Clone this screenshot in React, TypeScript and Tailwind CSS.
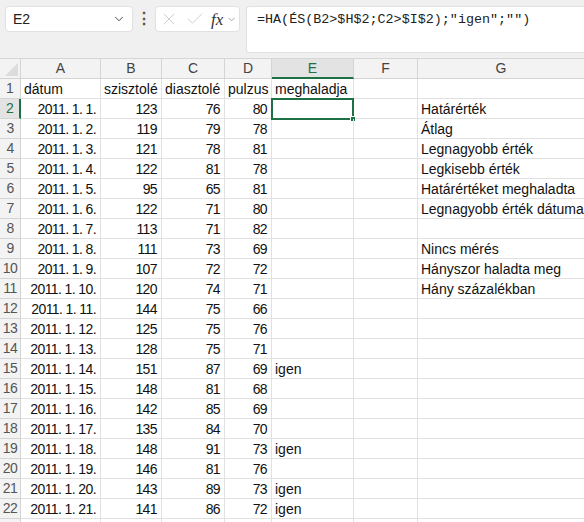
import { ChevronDown, X, Check } from "lucide-react"

type Row = { a: string; b: number; c: number; d: number; e?: string; g?: string }

const rows: Row[] = [
  { a: "2011. 1. 1.", b: 123, c: 76, d: 80, g: "Határérték" },
  { a: "2011. 1. 2.", b: 119, c: 79, d: 78, g: "Átlag" },
  { a: "2011. 1. 3.", b: 121, c: 78, d: 81, g: "Legnagyobb érték" },
  { a: "2011. 1. 4.", b: 122, c: 81, d: 78, g: "Legkisebb érték" },
  { a: "2011. 1. 5.", b: 95, c: 65, d: 81, g: "Határértéket meghaladta" },
  { a: "2011. 1. 6.", b: 122, c: 71, d: 80, g: "Legnagyobb érték dátuma" },
  { a: "2011. 1. 7.", b: 113, c: 71, d: 82 },
  { a: "2011. 1. 8.", b: 111, c: 73, d: 69, g: "Nincs mérés" },
  { a: "2011. 1. 9.", b: 107, c: 72, d: 72, g: "Hányszor haladta meg" },
  { a: "2011. 1. 10.", b: 120, c: 74, d: 71, g: "Hány százalékban" },
  { a: "2011. 1. 11.", b: 144, c: 75, d: 66 },
  { a: "2011. 1. 12.", b: 125, c: 75, d: 76 },
  { a: "2011. 1. 13.", b: 128, c: 75, d: 71 },
  { a: "2011. 1. 14.", b: 151, c: 87, d: 69, e: "igen" },
  { a: "2011. 1. 15.", b: 148, c: 81, d: 68 },
  { a: "2011. 1. 16.", b: 142, c: 85, d: 69 },
  { a: "2011. 1. 17.", b: 135, c: 84, d: 70 },
  { a: "2011. 1. 18.", b: 148, c: 91, d: 73, e: "igen" },
  { a: "2011. 1. 19.", b: 146, c: 81, d: 76 },
  { a: "2011. 1. 20.", b: 143, c: 89, d: 73, e: "igen" },
  { a: "2011. 1. 21.", b: 141, c: 86, d: 72, e: "igen" },
]

const grid = "grid grid-cols-[21px_80px_61px_63px_47px_82px_64px_1fr]"
const cell = "h-[20px] border-r border-b border-[#e1e1e1] leading-[21px] px-[3px] whitespace-nowrap overflow-visible"
const num = "text-right tracking-[-0.6px] pr-[4px]"
const colHead = "h-[20px] border-r border-b border-[#d4d4d4] flex items-center justify-center text-[14px] text-[#444]"

export default function App() {
  return (
    <div className="w-[584px] h-[522px] overflow-hidden bg-white text-[14px] text-[#111]" style={{ fontFamily: '"Liberation Sans", Arial, sans-serif' }}>
      {/* formula bar */}
      <div className="h-[59px] bg-[#f0f0f0] border-b border-[#d6d6d6] flex items-start pt-[6px] pl-[5px]">
        <div className="w-[128px] h-[26px] bg-white border border-[#e1e1e1] rounded-[4px] flex items-center justify-between pl-[7px] pr-[6px]">
          <span className="text-[14px] text-[#222]">E2</span>
          <ChevronDown className="w-[14px] h-[14px] text-[#444]" strokeWidth={1.6} />
        </div>
        <div className="w-[22px] h-[26px] flex items-center justify-center text-[#555] text-[16px] font-bold">⋮</div>
        <div className="w-[85px] h-[26px] bg-white border border-[#e1e1e1] rounded-[4px] flex items-center pl-[3px]">
          <X className="w-[20px] h-[20px] text-[#c4c4c4]" strokeWidth={1} />
          <Check className="ml-[6px] w-[20px] h-[20px] text-[#c4c4c4]" strokeWidth={1} />
          <span className="ml-[6px] text-[17px] italic text-[#333] leading-none" style={{ fontFamily: '"Liberation Serif", serif' }}>fx</span>
          <ChevronDown className="ml-[3px] w-[11px] h-[11px] text-[#888]" strokeWidth={1.6} />
        </div>
        <div className="ml-[6px] flex-1 h-[47px] bg-white border border-[#e1e1e1] rounded-l-[4px] border-r-0 pl-[10px] pt-[3px] text-[13.4px] text-[#222]" style={{ fontFamily: '"Liberation Mono", monospace' }}>
          =HA(ÉS(B2&gt;$H$2;C2&gt;$I$2);"igen";"")
        </div>
      </div>

      {/* column headers */}
      <div className={`${grid} bg-[#f3f3f3]`}>
        <div className="h-[20px] border-r border-b border-[#d4d4d4] relative">
          <div className="absolute right-[2px] bottom-[2px] w-0 h-0 border-l-[13px] border-l-transparent border-b-[13px] border-b-[#dcdcdc]" />
        </div>
        {["A", "B", "C", "D"].map((c) => (
          <div key={c} className={colHead}>{c}</div>
        ))}
        <div className="h-[20px] border-r border-[#d4d4d4] border-b-2 border-b-[#1e7145] bg-[#e3e3e3] flex items-center justify-center text-[14px] text-[#1e7145]">E</div>
        <div className={colHead}>F</div>
        <div className={`${colHead} border-r-0`}>G</div>
      </div>

      {/* row 1 */}
      <div className={grid}>
        <div className="h-[20px] border-r border-b border-[#d4d4d4] bg-[#f3f3f3] flex items-center justify-center text-[14px] text-[#555]">1</div>
        <div className={cell}>dátum</div>
        <div className={cell}>szisztolé</div>
        <div className={cell}>diasztolé</div>
        <div className={cell}>pulzus</div>
        <div className={cell}>meghaladja</div>
        <div className={cell}></div>
        <div className={`${cell} border-r-0`}></div>
      </div>

      {rows.map((r, i) => {
        const n = i + 2
        const active = n === 2
        return (
          <div key={n} className={grid}>
            <div
              className={`h-[20px] border-b border-[#d4d4d4] flex items-center justify-center text-[14px] tracking-[-0.6px] ${
                active ? "border-r-2 border-r-[#1e7145] bg-[#e3e3e3] text-[#1e7145]" : "border-r bg-[#f3f3f3] text-[#555]"
              }`}
            >
              {n}
            </div>
            <div className={`${cell} ${num}`}>{r.a}</div>
            <div className={`${cell} ${num}`}>{r.b}</div>
            <div className={`${cell} ${num}`}>{r.c}</div>
            <div className={`${cell} ${num}`}>{r.d}</div>
            <div className={`${cell} relative`}>
              {r.e}
              {active && (
                <div className="absolute -left-[1px] -top-[1px] w-[83px] h-[22px] border-2 border-[#1e7145]">
                  <div className="absolute -right-[4px] -bottom-[4px] w-[6px] h-[6px] bg-[#1e7145] border border-white" />
                </div>
              )}
            </div>
            <div className={cell}></div>
            <div className={`${cell} border-r-0`}>{r.g}</div>
          </div>
        )
      })}
      <div className={grid}>
        <div className="h-[20px] border-r border-[#d4d4d4] bg-[#f3f3f3]" />
        <div className="h-[20px] border-r border-[#e1e1e1]" />
        <div className="h-[20px] border-r border-[#e1e1e1]" />
        <div className="h-[20px] border-r border-[#e1e1e1]" />
        <div className="h-[20px] border-r border-[#e1e1e1]" />
        <div className="h-[20px] border-r border-[#e1e1e1]" />
        <div className="h-[20px] border-r border-[#e1e1e1]" />
        <div className="h-[20px]" />
      </div>
    </div>
  )
}
